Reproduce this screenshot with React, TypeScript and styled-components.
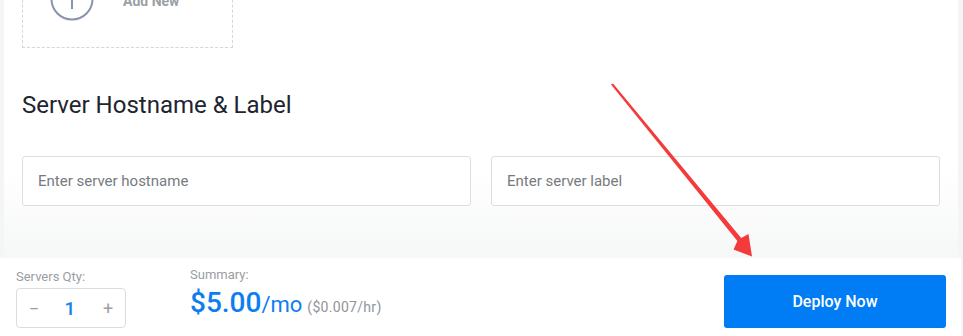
import styled, { createGlobalStyle } from "styled-components"

const GlobalStyle = createGlobalStyle`
  html, body {
    margin: 0;
    padding: 0;
    background: #f4f5f6;
    font-family: Roboto, "Liberation Sans", sans-serif;
  }
`

export default function App() {
  return (
    <Page>
      <GlobalStyle />
      <Card>
        <AddNew>
          <PlusCircle>
            <svg width="44" height="44" viewBox="0 0 44 44">
              <circle cx="22" cy="22" r="20.5" fill="none" stroke="#8794b0" strokeWidth="2" />
              <path d="M22 12v20M12 22h20" stroke="#8794b0" strokeWidth="2" />
            </svg>
          </PlusCircle>
          <AddText>Add New</AddText>
        </AddNew>
        <SectionTitle>Server Hostname &amp; Label</SectionTitle>
        <Fields>
          <Field placeholder="Enter server hostname" />
          <Field placeholder="Enter server label" />
        </Fields>
      </Card>
      <Footer>
        <QtyColumn>
          <Caption>Servers Qty:</Caption>
          <Stepper>
            <StepBtn>−</StepBtn>
            <QtyValue>1</QtyValue>
            <StepBtn>+</StepBtn>
          </Stepper>
        </QtyColumn>
        <SummaryColumn>
          <Caption>Summary:</Caption>
          <Price>
            <Amount>$5.00</Amount>
            <Per>/mo</Per>
            <Hourly>($0.007/hr)</Hourly>
          </Price>
        </SummaryColumn>
        <DeployButton>Deploy Now</DeployButton>
      </Footer>
      <Arrow width="963" height="336" viewBox="0 0 963 336">
        <polygon
          points="611,84.6 613,83.4 741.2,237.9 748.5,234 752,256.5 733.5,249.5 737.4,241.1"
          fill="#f43a3a"
        />
      </Arrow>
    </Page>
  )
}

const Page = styled.div`
  position: relative;
  height: 336px;
  width: 963px;
  display: flex;
  flex-direction: column;
  overflow: hidden;
`

const Card = styled.div`
  flex: 1;
  margin: 0 5px 0 4px;
  padding: 0 18px;
  background: linear-gradient(to bottom, #ffffff 0%, #ffffff 66%, #f6f7f7 100%);
  overflow: hidden;
`

const AddNew = styled.div`
  box-sizing: border-box;
  margin-top: -51px;
  width: 211px;
  height: 99px;
  border: 1px dashed #d4d6da;
  display: flex;
  align-items: center;
  padding-left: 27px;
`

const PlusCircle = styled.div`
  width: 44px;
  height: 44px;
  svg {
    display: block;
  }
`

const AddText = styled.span`
  margin-left: 29px;
  margin-top: 4px;
  font-size: 14px;
  font-weight: 700;
  color: #9aa0a7;
`

const SectionTitle = styled.h2`
  margin: 43px 0 0;
  font-size: 24px;
  line-height: 29px;
  font-weight: 400;
  color: #1e2430;
`

const Fields = styled.div`
  margin-top: 36px;
  display: grid;
  grid-template-columns: 1fr 1fr;
  column-gap: 20px;
`

const Field = styled.input`
  box-sizing: border-box;
  height: 50px;
  border: 1px solid #dcdfe2;
  border-radius: 3px;
  padding: 0 15px;
  font-family: Roboto, "Liberation Sans", sans-serif;
  font-size: 15px;
  color: #333;
  background: #fff;
  outline: none;
  &::placeholder {
    color: #767b80;
  }
`

const Footer = styled.div`
  height: 78px;
  flex-shrink: 0;
  background: #fff;
  margin-right: 2px;
  display: flex;
  align-items: flex-start;
  padding: 0 15px 0 16px;
  box-sizing: border-box;
`

const QtyColumn = styled.div`
  width: 174px;
  padding-top: 11px;
`

const SummaryColumn = styled.div`
  flex: 1;
  padding-top: 9px;
`

const Caption = styled.div`
  font-size: 13px;
  line-height: 15px;
  color: #9a9ea3;
`

const Stepper = styled.div`
  box-sizing: border-box;
  margin-top: 4px;
  width: 110px;
  height: 40px;
  border: 1px solid #d9dcdf;
  border-radius: 4px;
  display: flex;
  align-items: center;
  justify-content: space-between;
  padding: 0 10px 0 10px;
`

const StepBtn = styled.span`
  font-size: 18px;
  color: #9aa0a6;
  width: 14px;
  text-align: center;
`

const QtyValue = styled.span`
  font-size: 19px;
  font-weight: 500;
  color: #1581ea;
  margin-right: 2px;
`

const Price = styled.div`
  margin-top: 4px;
  display: flex;
  align-items: baseline;
  color: #0d7ef0;
`

const Amount = styled.span`
  font-size: 28px;
  font-weight: 500;
`

const Per = styled.span`
  font-size: 22px;
`

const Hourly = styled.span`
  margin-left: 5px;
  font-size: 14px;
  letter-spacing: 0.3px;
  color: #8f959b;
`

const DeployButton = styled.button`
  margin-top: 17px;
  width: 222px;
  height: 53px;
  border: none;
  border-radius: 3px;
  background: #007cf4;
  color: #fff;
  font-family: Roboto, "Liberation Sans", sans-serif;
  font-size: 16px;
  font-weight: 500;
  cursor: pointer;
`

const Arrow = styled.svg`
  position: absolute;
  left: 0;
  top: 0;
  pointer-events: none;
`
